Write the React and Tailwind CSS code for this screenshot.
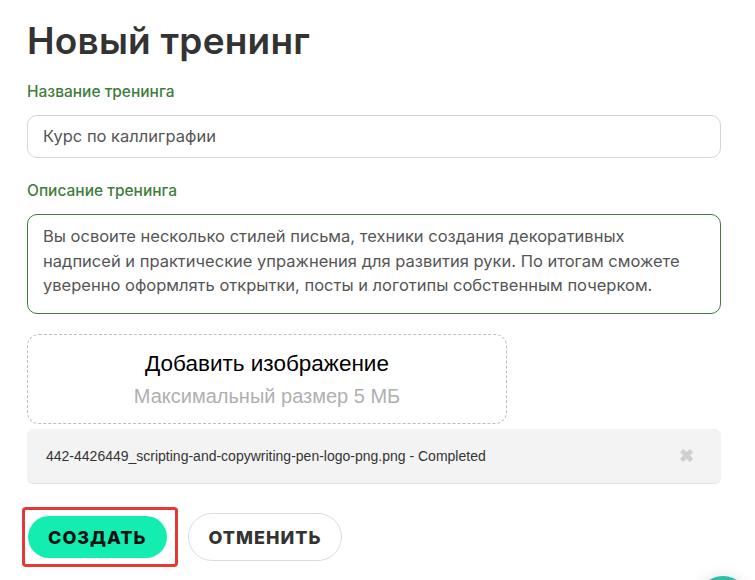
import React from "react";

const App = () => {
  return (
    <div className="relative w-[755px] h-[580px] overflow-hidden bg-white font-['Inter',sans-serif]">
      <div className="pl-[27px] pr-[34px] pt-[17px]">
        <h1 className="text-[37px] leading-[48px] font-semibold text-[#333] tracking-[0.2px]">
          Новый тренинг
        </h1>

        {/* Название */}
        <label className="block mt-[17px] text-[15.5px] leading-5 font-medium text-[#3f7d3c]">
          Название тренинга
        </label>
        <div className="mt-[13px] h-[43px] rounded-[10px] border border-[#d6d6d6] flex items-center px-[15px] text-[16.5px] text-[#555]">
          Курс по каллиграфии
        </div>

        {/* Описание */}
        <label className="block mt-[23px] text-[15.5px] leading-5 font-medium text-[#3f7d3c]">
          Описание тренинга
        </label>
        <div className="mt-[13px] h-[100px] rounded-[10px] border border-[#3f7d3c] px-[15px] pt-[9px] text-[16.5px] leading-[24.5px] text-[#555]">
          Вы освоите несколько стилей письма, техники создания декоративных
          <br />
          надписей и практические упражнения для развития руки. По итогам сможете
          <br />
          уверенно оформлять открытки, посты и логотипы собственным почерком.
        </div>

        {/* Загрузка */}
        <div className="mt-[20px] w-[480px] h-[90px] rounded-[12px] border border-dashed border-[#bdbdbd] flex flex-col items-center justify-center font-['Liberation_Sans',Arial,sans-serif]">
          <span className="text-[22.5px] leading-7 text-black">Добавить изображение</span>
          <span className="mt-[6px] text-[20px] leading-6 text-[#b0b0b0]">Максимальный размер 5 МБ</span>
        </div>
        <div className="mt-[5px] h-[55px] rounded-[6px] bg-[#f3f3f3] border-b border-dotted border-[#cfcfcf] flex items-center justify-between pl-[19px] pr-[27px] font-['Liberation_Sans',Arial,sans-serif]">
          <span className="text-[14px] text-[#333]">
            442-4426449_scripting-and-copywriting-pen-logo-png.png - Completed
          </span>
          <span className="text-[18px] font-bold text-[#cfcfcf] leading-none">✖</span>
        </div>

        {/* Кнопки */}
        <div className="mt-[23px] flex items-center gap-[10px] -ml-[5px]">
          <div className="border-[3px] border-[#e53935] rounded-[4px] pl-[3px] pr-[8px] py-[6px]">
            <button className="h-[42px] px-[20px] rounded-full bg-[#13edb0] text-[18px] font-extrabold tracking-[1px] text-[#111]">
              СОЗДАТЬ
            </button>
          </div>
          <button className="h-[48px] px-[20px] rounded-full border border-[#dcdcdc] bg-white text-[18px] font-extrabold tracking-[1px] text-[#333]">
            ОТМЕНИТЬ
          </button>
        </div>
      </div>

      {/* Плавающая кнопка */}
      <div className="absolute left-[697px] top-[576px] w-[52px] h-[52px] rounded-full bg-[#2bbfa3] shadow-[0_0_14px_rgba(0,0,0,0.12)]" />
    </div>
  );
};

export default App;
